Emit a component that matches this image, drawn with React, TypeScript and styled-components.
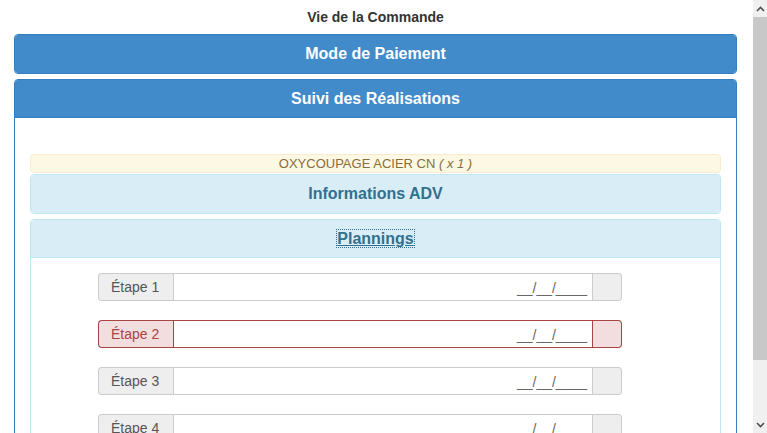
import React from "react";
import styled, { createGlobalStyle, css } from "styled-components";

const GlobalStyle = createGlobalStyle`
  html, body { margin: 0; padding: 0; background: #fff; overflow: hidden; }
  body { font-family: "Liberation Sans", Arial, sans-serif; }
  * { box-sizing: border-box; }
`;

const Page = styled.div`
  display: flex;
  height: 433px;
  width: 767px;
  overflow: hidden;
`;

const Main = styled.main`
  flex: 1;
  padding: 0 16px 0 14px;
  overflow: hidden;
`;

const Title = styled.div`
  height: 34px;
  line-height: 34px;
  text-align: center;
  font-size: 14px;
  font-weight: bold;
  color: #333;
`;

const PrimaryPanel = styled.section`
  border: 1px solid #357ebd;
  border-radius: 4px;
  margin-bottom: 5px;
  background: #fff;
  overflow: hidden;
`;

const PrimaryHeading = styled.div`
  background: #428bca;
  color: #fff;
  padding: 10px 15px;
  text-align: center;
  font-size: 16px;
  font-weight: bold;
  line-height: 18px;
`;

const PrimaryBody = styled.div`
  padding: 36px 15px 15px;
  border-top: 1px solid #357ebd;
  margin-top: -1px;
`;

const WarningBar = styled.div`
  background: #fcf8e3;
  border: 1px solid #faebcc;
  border-radius: 4px;
  color: #8a6d3b;
  text-align: center;
  font-size: 13px;
  line-height: 17px;
  height: 19px;
  margin-bottom: 1px;
`;

const InfoPanel = styled.section<{ $gap?: number }>`
  border: 1px solid #bce8f1;
  border-radius: 4px;
  margin-bottom: ${(p) => p.$gap ?? 0}px;
  background: #fff;
  overflow: hidden;
`;

const InfoHeading = styled.div<{ $lh?: number }>`
  background: #d9edf7;
  color: #31708f;
  padding: 10px 15px;
  text-align: center;
  font-size: 16px;
  font-weight: bold;
  line-height: ${(p) => p.$lh ?? 18}px;
`;

const HeadingLink = styled.span`
  text-decoration: underline;
  outline: 1px dotted #31708f;
  outline-offset: 0px;
`;

const InfoBody = styled.div`
  border-top: 1px solid #bce8f1;
  padding: 15px 15px 15px 67px;
`;

const InputGroup = styled.div<{ $error?: boolean }>`
  display: flex;
  width: 524px;
  height: 28px;
  margin-bottom: 19px;
  font-size: 14px;
  --bd: ${(p) => (p.$error ? "#a94442" : "#ccc")};
  --addon-bg: ${(p) => (p.$error ? "#f2dede" : "#eee")};
  --addon-fg: ${(p) => (p.$error ? "#a94442" : "#555")};
`;

const addonBase = css`
  background: var(--addon-bg);
  color: var(--addon-fg);
  border: 1px solid var(--bd);
  line-height: 26px;
`;

const LeftAddon = styled.span`
  ${addonBase};
  width: 75px;
  padding: 0 12px;
  border-right: 0;
  border-radius: 4px 0 0 4px;
`;

const DateInput = styled.div`
  flex: 1;
  border: 1px solid var(--bd);
  background: #fff;
  text-align: right;
  padding: 0 5px 0 12px;
  color: #666;
  line-height: 28px;
`;

const RightAddon = styled.span`
  ${addonBase};
  width: 29px;
  border-left: 0;
  border-radius: 0 4px 4px 0;
`;

const Scrollbar = styled.div`
  width: 14px;
  display: flex;
  flex-direction: column;
  background: #f0f0f0;
`;

const ScrollArrow = styled.div`
  height: 17px;
  display: flex;
  align-items: center;
  justify-content: center;
  background: #f0f0f0;
`;

const ScrollThumb = styled.div`
  height: 343px;
  background: #c8c8c8;
`;

const ScrollTrack = styled.div`
  flex: 1;
`;

const Chevron = ({ up }: { up?: boolean }) => (
  <svg width="9" height="6" viewBox="0 0 9 6">
    <path
      d={up ? "M1 5 L4.5 1.5 L8 5" : "M1 1 L4.5 4.5 L8 1"}
      fill="none"
      stroke="#505050"
      strokeWidth="1.6"
    />
  </svg>
);

const steps = [
  { label: "Étape 1", error: false },
  { label: "Étape 2", error: true },
  { label: "Étape 3", error: false },
  { label: "Étape 4", error: false },
];

export default function App() {
  return (
    <>
      <GlobalStyle />
      <Page>
        <Main>
          <Title>Vie de la Commande</Title>
          <PrimaryPanel>
            <PrimaryHeading>Mode de Paiement</PrimaryHeading>
          </PrimaryPanel>
          <PrimaryPanel>
            <PrimaryHeading>Suivi des Réalisations</PrimaryHeading>
            <PrimaryBody>
              <WarningBar>
                OXYCOUPAGE ACIER CN <i>( x 1 )</i>
              </WarningBar>
              <InfoPanel $gap={5}>
                <InfoHeading>Informations ADV</InfoHeading>
              </InfoPanel>
              <InfoPanel>
                <InfoHeading $lh={17}>
                  <HeadingLink>Plannings</HeadingLink>
                </InfoHeading>
                <InfoBody>
                  {steps.map((s) => (
                    <InputGroup key={s.label} $error={s.error}>
                      <LeftAddon>{s.label}</LeftAddon>
                      <DateInput>__/__/____</DateInput>
                      <RightAddon />
                    </InputGroup>
                  ))}
                </InfoBody>
              </InfoPanel>
            </PrimaryBody>
          </PrimaryPanel>
        </Main>
        <Scrollbar>
          <ScrollArrow>
            <Chevron up />
          </ScrollArrow>
          <ScrollThumb />
          <ScrollTrack />
          <ScrollArrow>
            <Chevron />
          </ScrollArrow>
        </Scrollbar>
      </Page>
    </>
  );
}
